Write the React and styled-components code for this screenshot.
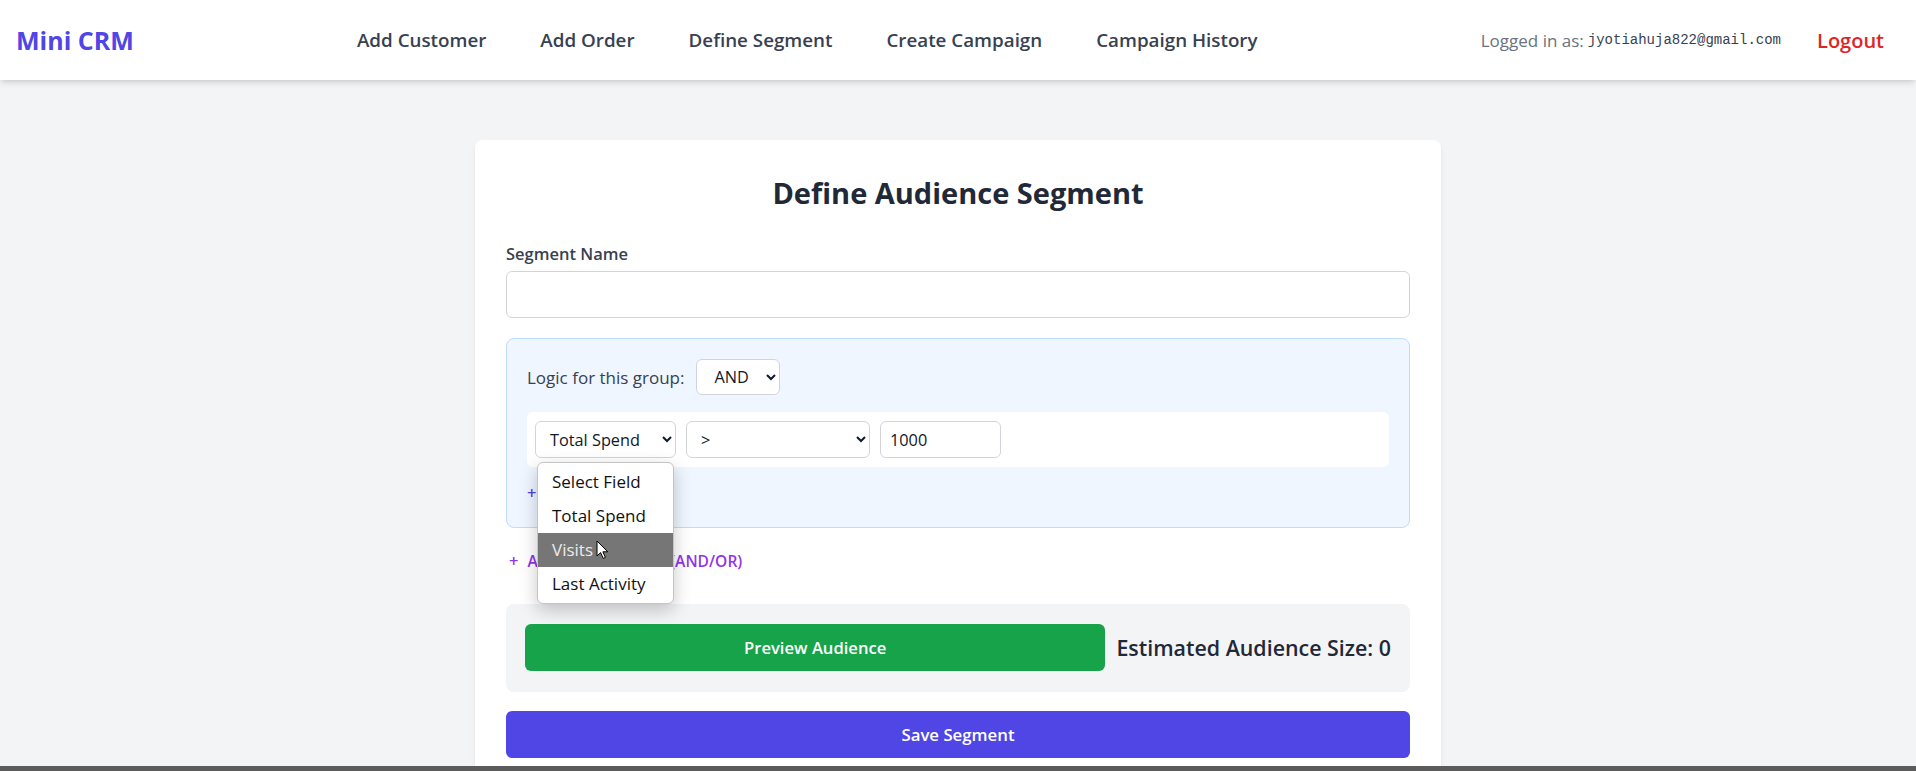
import React, { useState } from 'react';
import styled, { createGlobalStyle } from 'styled-components';

const GlobalStyle = createGlobalStyle`
  body {
    margin: 0;
    background: #f3f4f6;
    font-family: "Segoe UI", "Open Sans", "Noto Sans", sans-serif;
    color: #1f2937;
  }
  * { box-sizing: border-box; }
`;

const Header = styled.header`
  height: 80px;
  background: #ffffff;
  box-shadow: 0 4px 6px -1px rgba(0, 0, 0, 0.12), 0 2px 4px -2px rgba(0, 0, 0, 0.08);
  display: flex;
  align-items: center;
  justify-content: space-between;
  padding: 0 16px;
  position: relative;
  z-index: 2;
`;

const Logo = styled.div`
  font-size: 25px;
  font-weight: 700;
  color: #4f46e5;
`;

const Nav = styled.nav`
  display: flex;
  gap: 54px;
`;

const NavLink = styled.a`
  font-size: 18.8px;
  font-weight: 600;
  color: #374151;
  text-decoration: none;
  cursor: pointer;
`;

const UserArea = styled.div`
  display: flex;
  align-items: center;
`;

const LoggedIn = styled.span`
  font-size: 17px;
  color: #6b7280;
`;

const Email = styled.span`
  font-family: "Liberation Mono", "DejaVu Sans Mono", monospace;
  font-size: 14px;
  color: #374151;
  margin-left: 4px;
`;

const LogoutButton = styled.button`
  background: none;
  border: none;
  font-family: inherit;
  font-size: 20px;
  font-weight: 600;
  color: #dc2626;
  padding: 0 16px;
  margin-left: 20px;
  cursor: pointer;
`;

const Main = styled.main`
  padding-top: 60px;
`;

const Card = styled.div`
  width: 966px;
  margin: 0 auto;
  background: #ffffff;
  border-radius: 8px;
  box-shadow: 0 4px 6px -1px rgba(0, 0, 0, 0.08), 0 2px 4px -2px rgba(0, 0, 0, 0.06);
  padding: 32px 31px;
`;

const Title = styled.h2`
  margin: 0 0 28px;
  font-size: 29px;
  line-height: 42px;
  font-weight: 700;
  text-align: center;
  color: #1f2937;
`;

const Label = styled.label`
  display: block;
  font-size: 16.5px;
  line-height: 24px;
  font-weight: 600;
  color: #374151;
  margin-bottom: 5px;
`;

const TextInput = styled.input`
  display: block;
  width: 100%;
  height: 47px;
  border: 1px solid #d1d5db;
  border-radius: 6px;
  padding: 0 12px;
  font-family: inherit;
  font-size: 16px;
  margin-bottom: 20px;
  outline: none;
`;

const Group = styled.div`
  background: #eff6ff;
  border: 1px solid #bfdbfe;
  border-radius: 8px;
  padding: 20px 20px 22px;
`;

const LogicRow = styled.div`
  display: flex;
  align-items: center;
  gap: 12px;
  margin-bottom: 17px;
`;

const LogicLabel = styled.span`
  font-size: 17px;
  font-weight: 500;
  color: #374151;
`;

const Select = styled.select`
  height: ${p => p.$h || 37}px;
  width: ${p => p.$w}px;
  border: 1px solid #d1d5db;
  border-radius: 6px;
  background: #ffffff;
  font-family: inherit;
  font-size: 16.3px;
  color: #111827;
  padding: 0 8px 0 ${p => p.$pl || 10}px;
  outline: none;
`;

const ConditionRow = styled.div`
  display: flex;
  align-items: center;
  gap: 10px;
  background: #ffffff;
  border-radius: 6px;
  padding: 9px 8px;
`;

const FieldWrap = styled.div`
  position: relative;
`;

const ValueInput = styled.input`
  height: 37px;
  width: 121px;
  border: 1px solid #d1d5db;
  border-radius: 6px;
  padding: 0 9px;
  font-family: inherit;
  font-size: 16.3px;
  color: #111827;
  outline: none;
`;

const TextButton = styled.button`
  display: block;
  background: none;
  border: none;
  padding: 0;
  font-family: inherit;
  font-size: ${p => p.$size || 16.5}px;
  line-height: 24px;
  font-weight: 600;
  color: ${p => p.$color};
  cursor: pointer;
  margin: ${p => p.$margin};
`;

const Plus = styled.span`
  font-size: 16.5px;
  margin-right: 9px;
`;

const Dropdown = styled.ul`
  position: absolute;
  top: 41px;
  left: 2px;
  width: 137px;
  margin: 0;
  padding: 2px 0;
  list-style: none;
  background: #ffffff;
  border: 1px solid #c4c4c4;
  border-radius: 6px;
  box-shadow: 0 6px 18px rgba(0, 0, 0, 0.22);
  z-index: 5;
  overflow: hidden;
`;

const Option = styled.li`
  height: 34px;
  line-height: 34px;
  padding-left: 14px;
  font-size: 17px;
  color: ${p => (p.$active ? '#ececec' : '#111111')};
  background: ${p => (p.$active ? '#767676' : 'transparent')};
  position: relative;
`;

const Cursor = styled.svg`
  position: absolute;
  left: 58px;
  top: 7px;
`;

const PreviewPanel = styled.div`
  display: flex;
  align-items: center;
  gap: 11px;
  background: #f3f4f6;
  border-radius: 8px;
  padding: 20px 19px 21px;
`;

const PreviewButton = styled.button`
  flex: 1;
  height: 47px;
  border: none;
  border-radius: 6px;
  background: #16a34a;
  color: #ffffff;
  font-family: inherit;
  font-size: 16.6px;
  font-weight: 600;
  cursor: pointer;
`;

const Estimate = styled.span`
  font-size: 21.4px;
  font-weight: 600;
  color: #1f2937;
  white-space: nowrap;
`;

const SaveButton = styled.button`
  display: block;
  width: 100%;
  height: 47px;
  margin-top: 19px;
  border: none;
  border-radius: 6px;
  background: #4f46e5;
  color: #ffffff;
  font-family: inherit;
  font-size: 16.8px;
  font-weight: 600;
  cursor: pointer;
`;

const BottomBar = styled.div`
  position: fixed;
  left: 0;
  right: 0;
  bottom: 0;
  height: 5px;
  background: #5b5b5b;
  z-index: 10;
`;

const navItems = ['Add Customer', 'Add Order', 'Define Segment', 'Create Campaign', 'Campaign History'];
const fieldOptions = ['Select Field', 'Total Spend', 'Visits', 'Last Activity'];

export default function App() {
  const [name, setName] = useState('');
  const [value, setValue] = useState('1000');

  return (
    <>
      <GlobalStyle />
      <Header>
        <Logo>Mini CRM</Logo>
        <Nav>
          {navItems.map(item => (
            <NavLink key={item}>{item}</NavLink>
          ))}
        </Nav>
        <UserArea>
          <LoggedIn>Logged in as:</LoggedIn>
          <Email>jyotiahuja822@gmail.com</Email>
          <LogoutButton>Logout</LogoutButton>
        </UserArea>
      </Header>

      <Main>
        <Card>
          <Title>Define Audience Segment</Title>
          <Label>Segment Name</Label>
          <TextInput value={name} onChange={e => setName(e.target.value)} />

          <Group>
            <LogicRow>
              <LogicLabel>Logic for this group:</LogicLabel>
              <Select $w={84} $h={36} $pl={13} defaultValue="AND">
                <option>AND</option>
                <option>OR</option>
              </Select>
            </LogicRow>
            <ConditionRow>
              <FieldWrap>
                <Select $w={141} defaultValue="Total Spend">
                  {fieldOptions.map(o => (
                    <option key={o}>{o}</option>
                  ))}
                </Select>
                <Dropdown>
                  {fieldOptions.map(o => (
                    <Option key={o} $active={o === 'Visits'}>
                      {o}
                      {o === 'Visits' && (
                        <Cursor width="13" height="20" viewBox="0 0 13 20">
                          <path
                            d="M1 1 L1 16 L4.6 12.6 L7.2 18.4 L9.4 17.4 L6.9 11.8 L11.8 11.8 Z"
                            fill="#ffffff"
                            stroke="#000000"
                            strokeWidth="1"
                            strokeLinejoin="round"
                          />
                        </Cursor>
                      )}
                    </Option>
                  ))}
                </Dropdown>
              </FieldWrap>
              <Select $w={184} defaultValue=">">
                <option>&gt;</option>
                <option>&lt;</option>
                <option>=</option>
              </Select>
              <ValueInput value={value} onChange={e => setValue(e.target.value)} />
            </ConditionRow>
            <TextButton $color="#4f46e5" $margin="14px 0 0">
              <Plus>+</Plus>Add Condition
            </TextButton>
          </Group>

          <TextButton $color="#9333ea" $size={15.6} $margin="21px 0 31px 3px">
            <Plus>+</Plus>Add Nested Group (AND/OR)
          </TextButton>

          <PreviewPanel>
            <PreviewButton>Preview Audience</PreviewButton>
            <Estimate>Estimated Audience Size: 0</Estimate>
          </PreviewPanel>

          <SaveButton>Save Segment</SaveButton>
        </Card>
      </Main>
      <BottomBar />
    </>
  );
}
